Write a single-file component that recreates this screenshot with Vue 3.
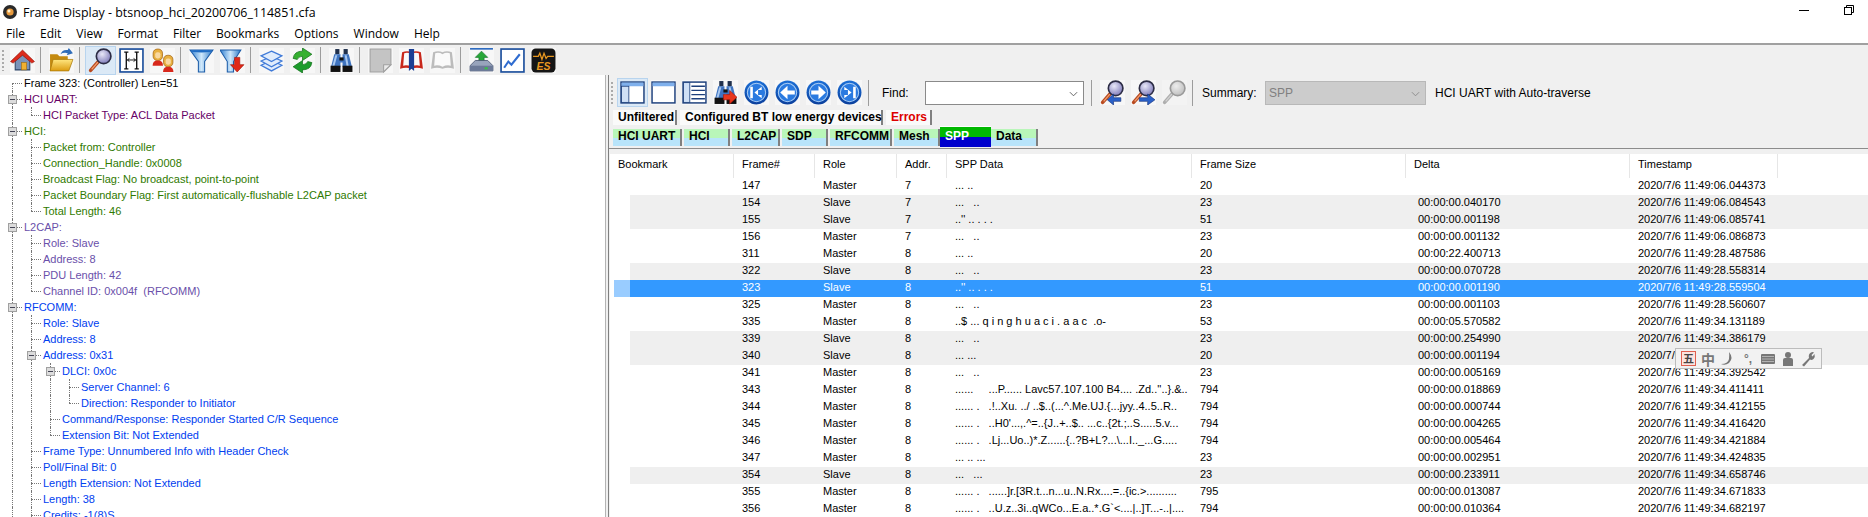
<script setup>
const menus = ['File', 'Edit', 'View', 'Format', 'Filter', 'Bookmarks', 'Options', 'Window', 'Help']

const P = 'purple', G = 'green', V = 'violet', B = 'blue'
const tree = [
  { t: 'Frame 323: (Controller) Len=51', d: 0, c: 'black', k: 'first' },
  { t: 'HCI UART:', d: 0, c: P, k: 'tee', box: true },
  { t: 'HCI Packet Type: ACL Data Packet', d: 1, c: P, k: 'ell' },
  { t: 'HCI:', d: 0, c: G, k: 'tee', box: true },
  { t: 'Packet from: Controller', d: 1, c: G, k: 'tee' },
  { t: 'Connection_Handle: 0x0008', d: 1, c: G, k: 'tee' },
  { t: 'Broadcast Flag: No broadcast, point-to-point', d: 1, c: G, k: 'tee' },
  { t: 'Packet Boundary Flag: First automatically-flushable L2CAP packet', d: 1, c: G, k: 'tee' },
  { t: 'Total Length: 46', d: 1, c: G, k: 'ell' },
  { t: 'L2CAP:', d: 0, c: V, k: 'tee', box: true },
  { t: 'Role: Slave', d: 1, c: V, k: 'tee' },
  { t: 'Address: 8', d: 1, c: V, k: 'tee' },
  { t: 'PDU Length: 42', d: 1, c: V, k: 'tee' },
  { t: 'Channel ID: 0x004f  (RFCOMM)', d: 1, c: V, k: 'ell' },
  { t: 'RFCOMM:', d: 0, c: B, k: 'tee', box: true },
  { t: 'Role: Slave', d: 1, c: B, k: 'tee' },
  { t: 'Address: 8', d: 1, c: B, k: 'tee' },
  { t: 'Address: 0x31', d: 1, c: B, k: 'tee', box: true },
  { t: 'DLCI: 0x0c', d: 2, c: B, k: 'tee', box: true },
  { t: 'Server Channel: 6', d: 3, c: B, k: 'tee' },
  { t: 'Direction: Responder to Initiator', d: 3, c: B, k: 'ell' },
  { t: 'Command/Response: Responder Started C/R Sequence', d: 2, c: B, k: 'tee' },
  { t: 'Extension Bit: Not Extended', d: 2, c: B, k: 'ell' },
  { t: 'Frame Type: Unnumbered Info with Header Check', d: 1, c: B, k: 'tee' },
  { t: 'Poll/Final Bit: 0', d: 1, c: B, k: 'tee' },
  { t: 'Length Extension: Not Extended', d: 1, c: B, k: 'tee' },
  { t: 'Length: 38', d: 1, c: B, k: 'tee' },
  { t: 'Credits: -1(8)S', d: 1, c: B, k: 'tee' },
]

const filterTabs = [
  { t: 'Unfiltered', w: 64 },
  { t: 'Configured BT low energy devices', w: 203 },
  { t: 'Errors', w: 46, red: true },
]
const layerTabs = [
  { t: 'HCI UART', w: 69 },
  { t: 'HCI', w: 46 },
  { t: 'L2CAP', w: 48 },
  { t: 'SDP', w: 46 },
  { t: 'RFCOMM', w: 62 },
  { t: 'Mesh', w: 46 },
  { t: 'SPP', w: 51, active: true },
  { t: 'Data', w: 47 },
]

const columns = ['Bookmark', 'Frame#', 'Role', 'Addr.', 'SPP Data', 'Frame Size', 'Delta', 'Timestamp']
const rows = [
  [147, 'Master', 7, '... ..', 20, '', '2020/7/6 11:49:06.044373', 0],
  [154, 'Slave', 7, '...   ..', 23, '00:00:00.040170', '2020/7/6 11:49:06.084543', 1],
  [155, 'Slave', 7, "..'' .. . . .", 51, '00:00:00.001198', '2020/7/6 11:49:06.085741', 1],
  [156, 'Master', 7, '...   ..', 23, '00:00:00.001132', '2020/7/6 11:49:06.086873', 0],
  [311, 'Master', 8, '... ..', 20, '00:00:22.400713', '2020/7/6 11:49:28.487586', 0],
  [322, 'Slave', 8, '...   ..', 23, '00:00:00.070728', '2020/7/6 11:49:28.558314', 1],
  [323, 'Slave', 8, "..'' .. . . .", 51, '00:00:00.001190', '2020/7/6 11:49:28.559504', 2],
  [325, 'Master', 8, '...   ..', 23, '00:00:00.001103', '2020/7/6 11:49:28.560607', 0],
  [335, 'Master', 8, '..$ ... q i n g h u a c i . a a c  .o-', 53, '00:00:05.570582', '2020/7/6 11:49:34.131189', 0],
  [339, 'Slave', 8, '...   ..', 23, '00:00:00.254990', '2020/7/6 11:49:34.386179', 1],
  [340, 'Slave', 8, '... ...', 20, '00:00:00.001194', '2020/7/6 11:49:34.387373', 1],
  [341, 'Master', 8, '...   ..', 23, '00:00:00.005169', '2020/7/6 11:49:34.392542', 0],
  [343, 'Master', 8, '......     ...P...... Lavc57.107.100 B4.... .Zd..\'\'..}.&..', 794, '00:00:00.018869', '2020/7/6 11:49:34.411411', 0],
  [344, 'Master', 8, '...... .   .!..Xu. ../ ..$..(...^.Me.UJ.{...jyy..4..5..R..', 794, '00:00:00.000744', '2020/7/6 11:49:34.412155', 0],
  [345, 'Master', 8, "...... .   ..H0'...,.^=..{J..+..$.. ...c..{2t.;..S.....5.v...", 794, '00:00:00.004265', '2020/7/6 11:49:34.416420', 0],
  [346, 'Master', 8, '...... .   .Lj...Uo..)*.Z......{..?B+L?...\\...I.._...G.....', 794, '00:00:00.005464', '2020/7/6 11:49:34.421884', 0],
  [347, 'Master', 8, '... .. ...', 23, '00:00:00.002951', '2020/7/6 11:49:34.424835', 0],
  [354, 'Slave', 8, '...   ...', 23, '00:00:00.233911', '2020/7/6 11:49:34.658746', 1],
  [355, 'Master', 8, '...... .   ......]r.[3R.t...n...u..N.Rx....=..{ic.>..........', 795, '00:00:00.013087', '2020/7/6 11:49:34.671833', 0],
  [356, 'Master', 8, '...... .   ..U.z..3i..qWCo...E.a..*.G`<....|..]T...-..|....', 794, '00:00:00.010364', '2020/7/6 11:49:34.682197', 0],
]
</script>

<template>
  <div class="window">
    <svg class="defs" width="0" height="0">
      <defs>
        <linearGradient id="funnelG" x1="0" x2="1" y1="0" y2="0">
          <stop offset="0" stop-color="#2f7fd0" /><stop offset="0.5" stop-color="#cfe8fb" /><stop offset="1" stop-color="#2a78c8" />
        </linearGradient>
        <linearGradient id="navG" x1="0" x2="0" y1="0" y2="1">
          <stop offset="0" stop-color="#1c6fd6" /><stop offset="1" stop-color="#0a3f9c" />
        </linearGradient>
        <linearGradient id="folderG" x1="0" x2="0" y1="0" y2="1">
          <stop offset="0" stop-color="#ffe680" /><stop offset="1" stop-color="#dc9c10" />
        </linearGradient>
        <radialGradient id="lensG" cx="0.4" cy="0.35" r="0.7">
          <stop offset="0" stop-color="#e8e8f8" /><stop offset="1" stop-color="#7c78b8" />
        </radialGradient>
        <symbol id="binoc" viewBox="0 0 24 24">
          <rect x="6" y="1" width="4" height="5" fill="#20304c" /><rect x="14" y="1" width="4" height="5" fill="#20304c" />
          <path d="M5 6h6v5h2V6h6l3 12H13v-4h-2v4H2z" fill="#3f74c0" />
          <path d="M6 7h2L5 18H3zM15 7h2l2 11h-2z" fill="#a8c8f0" />
          <rect x="1.5" y="17" width="9.5" height="6" fill="#111" /><rect x="13" y="17" width="9.5" height="6" fill="#111" />
          <rect x="10" y="9" width="4" height="3" fill="#111" />
        </symbol>
        <symbol id="lens" viewBox="0 0 24 24">
          <path d="M10 13L2.5 21.5" stroke="#b84a20" stroke-width="3.4" stroke-linecap="round" />
          <path d="M9.5 13.5L3.5 20.5" stroke="#f4a070" stroke-width="1.2" />
          <circle cx="15" cy="8" r="7" fill="url(#lensG)" stroke="#2c2c44" stroke-width="1.6" />
        </symbol>
        <symbol id="book" viewBox="0 0 24 24">
          <path d="M1 20L3 4q5-2 9 0q4-2 9 0l2 16q-6-2-11 0q-5-2-11 0z" fill="currentColor" />
          <path d="M4 17L5 5q4-1 7 1q3-2 7-1l1 12q-4-1-8 1q-4-2-8-1z" fill="#fafafa" />
        </symbol>
      </defs>
    </svg>

    <div class="title-bar">
      <svg class="app-icon" viewBox="0 0 14 14">
        <circle cx="7" cy="7" r="7" fill="#2a2a2a" />
        <circle cx="7" cy="7" r="3.6" fill="#e89a3c" />
        <circle cx="6" cy="6" r="1.5" fill="#fff2d0" />
      </svg>
      <span class="title-text">Frame Display - btsnoop_hci_20200706_114851.cfa</span>
      <svg class="win-btn min" viewBox="0 0 10 10"><path d="M0 5.5h10" stroke="#000" stroke-width="1" /></svg>
      <svg class="win-btn restore" viewBox="0 0 10 10" fill="none" stroke="#000">
        <path d="M2.5 2.5V.5h7v7h-2" /><rect x=".5" y="2.5" width="7" height="7" />
      </svg>
    </div>

    <div class="menu-bar">
      <span v-for="m in menus" :key="m">{{ m }}</span>
    </div>

    <div class="toolbar main-tools">
      <i class="grip"></i>
      <button class="tb">
        <svg viewBox="0 0 24 24">
          <path d="M5 12v9h14v-9l-7-6z" fill="#7b93b8" stroke="#2f4668" stroke-width="1" />
          <rect x="11" y="14" width="5" height="7" fill="#f0b030" stroke="#a06c10" stroke-width=".6" />
          <path d="M0.5 13L12 2l11.5 11-2.5 1.5L12 7l-9 7.5z" fill="#dc2a1c" stroke="#901408" stroke-width=".6" />
        </svg>
      </button>
      <i class="sep"></i>
      <button class="tb">
        <svg viewBox="0 0 24 24">
          <path d="M1 6h7l2 2h8v14H1z" fill="#c48a10" />
          <path d="M4 11h19l-4 11H1z" fill="url(#folderG)" stroke="#a87808" stroke-width=".7" />
          <path d="M11 6q2-5 7-4l1-2 4 5-6 2 1-2q-4-1-7 1z" fill="#2f6cb8" />
        </svg>
      </button>
      <i class="sep"></i>
      <button class="tb on"><svg viewBox="0 0 24 24"><use href="#lens" /></svg></button>
      <button class="tb">
        <svg viewBox="0 0 24 24">
          <rect x="1" y="1" width="22" height="22" fill="#fff" stroke="#1c4f9c" stroke-width="1.6" />
          <path d="M5 4h4M5 20h4M15 4h4M15 20h4M7 4v16M17 4v16" stroke="#111" stroke-width="1.3" fill="none" />
          <path d="M8 11.5h8M8 11.5l2-1.5M8 11.5l2 1.5M16 11.5l-2-1.5M16 11.5l-2 1.5" stroke="#111" stroke-width=".9" fill="none" />
        </svg>
      </button>
      <button class="tb">
        <svg viewBox="0 0 24 24">
          <rect x="3" y="1" width="9" height="11" rx="4" fill="#e8b040" stroke="#a06010" stroke-width=".7" />
          <rect x="5" y="4" width="5" height="6" rx="2" fill="#f8d8a0" />
          <path d="M2.500 17q0-5 5-5t5 5z" fill="#d8281c" />
          <rect x="13" y="7" width="9" height="11" rx="4" fill="#e8b040" stroke="#a06010" stroke-width=".7" />
          <rect x="15" y="10" width="5" height="6" rx="2" fill="#f8d8a0" />
          <path d="M12.500 23q0-5 5-5t5 5z" fill="#d8281c" />
        </svg>
      </button>
      <i class="sep"></i>
      <button class="tb">
        <svg viewBox="0 0 24 24">
          <path d="M1 2h22l-8 11v10H9V13z" fill="url(#funnelG)" stroke="#1c5ca8" stroke-width="1" />
          <ellipse cx="12" cy="3" rx="10.5" ry="1.2" fill="#1f6cc4" />
        </svg>
      </button>
      <button class="tb">
        <svg viewBox="0 0 24 24">
          <path d="M0 2h20l-7 11v10H7V13z" fill="url(#funnelG)" stroke="#1c5ca8" stroke-width="1" />
          <path d="M14 9h5v7h4l-6.500 7L10 16h4z" fill="#e02818" stroke="#a01408" stroke-width=".6" />
        </svg>
      </button>
      <i class="sep"></i>
      <button class="tb">
        <svg viewBox="0 0 24 24" fill="#e0ecfc" stroke="#3f7ad8" stroke-width="1.2">
          <path d="M12 12l10 4.500L12 22 2 16.500z" />
          <path d="M12 8l10 4.500L12 18 2 12.500z" />
          <path d="M12 3l10 4.500L12 13 2 7.500z" />
        </svg>
      </button>
      <button class="tb">
        <svg viewBox="0 0 24 24">
          <path d="M3 10q1-7 9-7V0l9 6-9 6V8q-4 0-5 3z" fill="#36b030" stroke="#12701a" stroke-width=".7" />
          <path d="M21 14q-1 7-9 7v3l-9-6 9-6v4q4 0 5-3z" fill="#1c9c2c" stroke="#12701a" stroke-width=".7" />
        </svg>
      </button>
      <i class="sep"></i>
      <button class="tb"><svg viewBox="0 0 24 24"><use href="#binoc" /></svg></button>
      <i class="sep"></i>
      <button class="tb">
        <svg viewBox="0 0 24 24">
          <path d="M2 1h20v15l-7 7H2z" fill="#c4c4c4" stroke="#a0a0a0" />
          <path d="M22 16h-7v7z" fill="#eaeaea" stroke="#a0a0a0" />
        </svg>
      </button>
      <button class="tb">
        <svg viewBox="0 0 24 24">
          <use href="#book" class="red-book" />
          <path d="M9.5 1h5v21l-2.500-2-2.500 2z" fill="#1c3f94" />
        </svg>
      </button>
      <button class="tb"><svg viewBox="0 0 24 24"><use href="#book" class="grey-book" /></svg></button>
      <i class="sep"></i>
      <button class="tb">
        <svg viewBox="0 0 24 24">
          <rect x="1" y="0" width="22" height="1.6" fill="#2f6cc0" />
          <path d="M12 3l6 6h-3.500v5h-5V9H6z" fill="#28a838" stroke="#10702a" stroke-width=".6" />
          <path d="M1 17l5-5h12l5 5v5H1z" fill="#98a4bc" stroke="#4c5874" stroke-width=".8" />
          <path d="M1 17h22v5H1z" fill="#6c7a98" />
          <rect x="15" y="18.500" width="3" height="2" fill="#38c048" />
        </svg>
      </button>
      <button class="tb">
        <svg viewBox="0 0 24 24">
          <rect x="1" y="1" width="22" height="22" fill="#fff" stroke="#1c4f9c" stroke-width="1.6" />
          <path d="M4 19l4-6 3 3 8-10" fill="none" stroke="#2f6cd0" stroke-width="2" />
        </svg>
      </button>
      <button class="tb">
        <svg viewBox="0 0 24 24">
          <rect x="0.5" y="0.5" width="23" height="23" rx="4" fill="#151515" />
          <path d="M2 8h5l1.500-3 2 6 2-6 2 5 1.500-2H22" fill="none" stroke="#e89820" stroke-width="1.200" />
          <text x="12" y="21" text-anchor="middle" class="es">ES</text>
        </svg>
      </button>
    </div>

    <div class="panes">
      <div class="tree-pane">
        <div v-for="(n, i) in tree" :key="i" class="node" :class="n.c">
          <i v-for="g in n.d" :key="g" class="guide"></i>
          <i class="link" :class="n.k">
            <b v-if="n.box" class="box"></b>
          </i>
          <span class="node-text">{{ n.t }}</span>
        </div>
      </div>

      <div class="detail-pane">
        <div class="toolbar detail-tools">
          <i class="grip"></i>
          <button class="tb on">
            <svg viewBox="0 0 24 24">
              <rect x="1" y="2" width="22" height="20" fill="#fff" stroke="#1c3f7c" stroke-width="1.400" />
              <rect x="1.500" y="2.500" width="21" height="3.500" fill="#7fb0ec" />
              <rect x="1.500" y="6" width="7" height="15.500" fill="#cfe0f6" stroke="#1c3f7c" stroke-width=".8" />
            </svg>
          </button>
          <button class="tb">
            <svg viewBox="0 0 24 24">
              <rect x="1" y="2" width="22" height="20" fill="#fff" stroke="#1c3f7c" stroke-width="1.400" />
              <rect x="1.500" y="2.500" width="21" height="3.500" fill="#7fb0ec" />
            </svg>
          </button>
          <button class="tb">
            <svg viewBox="0 0 24 24">
              <rect x="1" y="2" width="22" height="20" fill="#fff" stroke="#1c3f7c" stroke-width="1.400" />
              <rect x="1.500" y="2.500" width="6" height="19" fill="#cfe0f6" stroke="#1c3f7c" stroke-width=".8" />
              <path d="M9 6h13M9 10h13M9 14h13M9 18h13" stroke="#1c3f7c" stroke-width="1.300" />
            </svg>
          </button>
          <button class="tb">
            <svg viewBox="0 0 24 24">
              <use href="#binoc" />
              <path d="M10 14h6v-4l7 6.500-7 6.500v-4h-6z" fill="#e8361c" stroke="#a01408" stroke-width=".6" />
            </svg>
          </button>
          <button class="tb">
            <svg viewBox="0 0 24 24">
              <circle cx="12" cy="12" r="11.500" fill="url(#navG)" />
              <circle cx="12" cy="12" r="8.800" fill="#2a7ae0" stroke="#a8ccf4" stroke-width="1" />
              <path d="M6 6.500h2.500v11H6zM17 6.500v3h-3.500v5H17v3l-7-5.500z" fill="#fff" />
            </svg>
          </button>
          <button class="tb">
            <svg viewBox="0 0 24 24">
              <circle cx="12" cy="12" r="11.500" fill="url(#navG)" />
              <circle cx="12" cy="12" r="8.800" fill="#2a7ae0" stroke="#a8ccf4" stroke-width="1" />
              <path d="M5 12l7-6.500V10h7v4h-7v4.500z" fill="#fff" />
            </svg>
          </button>
          <button class="tb">
            <svg viewBox="0 0 24 24">
              <circle cx="12" cy="12" r="11.500" fill="url(#navG)" />
              <circle cx="12" cy="12" r="8.800" fill="#2a7ae0" stroke="#a8ccf4" stroke-width="1" />
              <path d="M19 12l-7-6.500V10H5v4h7v4.500z" fill="#fff" />
            </svg>
          </button>
          <button class="tb">
            <svg viewBox="0 0 24 24">
              <circle cx="12" cy="12" r="11.500" fill="url(#navG)" />
              <circle cx="12" cy="12" r="8.800" fill="#2a7ae0" stroke="#a8ccf4" stroke-width="1" />
              <path d="M18 6.500h-2.500v11H18zM7 6.500v3h3.500v5H7v3l7-5.500z" fill="#fff" />
            </svg>
          </button>
          <i class="sep find-sep"></i>
          <label class="find-label">Find:</label>
          <div class="combo">
            <svg viewBox="0 0 10 6" class="chev"><path d="M1 1l4 4 4-4" fill="none" stroke="#555" /></svg>
          </div>
          <i class="sep combo-sep"></i>
          <button class="tb">
            <svg viewBox="0 0 24 24">
              <use href="#lens" />
              <path d="M20 17h-7v-3.500l-6 5.500 6 5v-3.500h7z" fill="#2a60c8" stroke="#12307c" stroke-width=".6" />
            </svg>
          </button>
          <button class="tb">
            <svg viewBox="0 0 24 24">
              <use href="#lens" />
              <path d="M8 17h8v-3.500l7 5.500-7 5v-3.500H8z" fill="#2a60c8" stroke="#12307c" stroke-width=".6" />
            </svg>
          </button>
          <button class="tb faded"><svg viewBox="0 0 24 24"><use href="#lens" /></svg></button>
          <i class="sep summary-sep"></i>
          <label class="summary-label">Summary:</label>
          <div class="combo summary">
            <span>SPP</span>
            <svg viewBox="0 0 10 6" class="chev"><path d="M1 1l4 4 4-4" fill="none" stroke="#888" /></svg>
          </div>
          <span class="traverse">HCI UART with Auto-traverse</span>
        </div>

        <div class="tabs filter-tabs">
          <span v-for="t in filterTabs" :key="t.t" class="tab" :class="{ red: t.red }" :style="{ width: t.w + 'px' }">{{ t.t }}</span>
        </div>
        <div class="tabs layer-tabs">
          <span v-for="t in layerTabs" :key="t.t" class="tab" :class="{ active: t.active }" :style="{ width: t.w + 'px' }">{{ t.t }}</span>
        </div>

        <div class="table">
          <div class="thead">
            <span v-for="c in columns" :key="c" class="th">{{ c }}</span>
            <span class="th tail"></span>
          </div>
          <div v-for="r in rows" :key="r[0]" class="row" :class="{ selected: r[7] === 2 }">
            <i class="gutter"></i>
            <div class="cells" :class="{ striped: r[7] === 1 }">
              <span></span>
              <span>{{ r[0] }}</span>
              <span>{{ r[1] }}</span>
              <span>{{ r[2] }}</span>
              <span class="data">{{ r[3] }}</span>
              <span>{{ r[4] }}</span>
              <span class="delta">{{ r[5] }}</span>
              <span>{{ r[6] }}</span>
            </div>
          </div>
        </div>
      </div>
    </div>

    <div class="ime-bar">
      <span class="ime-wu">五</span>
      <span class="ime-zh">中</span>
      <svg viewBox="0 0 16 16"><path d="M9 1q5 6 0 11-4 3-8 1 7 0 8-5 .5-4 0-7z" fill="#777" /></svg>
      <span class="ime-punc">°,</span>
      <svg viewBox="0 0 16 16"><rect x="1" y="3" width="14" height="10" rx="1" fill="#777" /><path d="M2.500 5.500h11M2.500 8h11M2.500 10.500h11" stroke="#eee" stroke-dasharray="1 1" /></svg>
      <svg viewBox="0 0 16 16"><circle cx="8" cy="4" r="3" fill="#777" /><path d="M3 15V9q0-2 2-2h6q2 0 2 2v6z" fill="#777" /></svg>
      <svg viewBox="0 0 16 16"><path d="M2 14l7-7q-1-4 2-5.500 2-.8 3 0l-2.500 2.500 1 1.500 2-2.500q1 3-1 5-2 1.500-3.500.5l-6 7z" fill="#777" /></svg>
    </div>
  </div>
</template>

<style>
html, body {
  margin: 0;
  overflow: hidden;
  background: #fff;
}
</style>

<style scoped>
.window {
  position: relative;
  display: flex;
  flex-direction: column;
  width: 1868px;
  height: 517px;
  overflow: hidden;
  background: #fff;
  font-family: "Liberation Sans", Arial, sans-serif;
  font-size: 12px;
  color: #000;
}

.defs {
  position: absolute;
}

.title-bar {
  display: flex;
  align-items: center;
  height: 24px;
  padding-left: 3px;
  flex: none;
}

.app-icon {
  width: 14px;
  height: 14px;
  margin-right: 6px;
}

.title-text {
  font-family: "Open Sans", sans-serif;
  font-size: 12.4px;
}

.win-btn {
  width: 10px;
  height: 10px;
  margin-top: -4px;
}

.win-btn.min {
  margin-left: auto;
}

.win-btn.restore {
  margin-left: 35px;
  margin-right: 14px;
}

.menu-bar {
  display: flex;
  gap: 15px;
  height: 19px;
  padding-left: 6px;
  flex: none;
  align-items: center;
  font-family: "Open Sans", sans-serif;
  font-size: 12px;
  border-bottom: 2px solid #a0a0a0;
  box-sizing: content-box;
}

.toolbar {
  display: flex;
  align-items: center;
  background: #f0f0f0;
  flex: none;
}

.main-tools {
  position: relative;
  height: 30px;
  padding-left: 7px;
}

.grip {
  position: absolute;
  left: 2px;
  top: 4px;
  bottom: 4px;
  width: 2px;
  background: radial-gradient(circle, #aaa 1px, transparent 1px) 0 0 / 2px 4px;
}

.tb {
  display: flex;
  align-items: center;
  justify-content: center;
  width: 31px;
  height: 29px;
  padding: 0;
  border: 1px solid transparent;
  background: none;
  box-sizing: border-box;
}

.tb svg {
  width: 25px;
  height: 25px;
  background: #f7f7f7;
}

.tb.on {
  background: #dbe9f6;
  border-color: #b8d4ee;
}

.tb.on svg {
  background: none;
}

.tb.faded svg {
  filter: grayscale(1) opacity(0.45);
}

.sep {
  width: 1px;
  height: 26px;
  margin: 0 5px 0 2px;
  background: #9c9c9c;
  flex: none;
}

.es {
  font-family: "Liberation Sans", sans-serif;
  font-size: 10px;
  font-weight: 700;
  font-style: italic;
  fill: #e89820;
}

.red-book {
  color: #c8281c;
}

.grey-book {
  color: #bcbcbc;
}

.panes {
  display: flex;
  flex: 1;
  min-height: 0;
  background: #f0f0f0;
}

.tree-pane {
  width: 605px;
  flex: none;
  background: #fff;
  border-right: 1px solid #b4b4b4;
  overflow: hidden;
  font-size: 11px;
}

.node {
  display: flex;
  height: 16px;
  padding-left: 12px;
  line-height: 16px;
  white-space: pre;
}

.node.black { color: #000; }
.node.purple { color: #660066; }
.node.green { color: #2f7a00; }
.node.violet { color: #6a50aa; }
.node.blue { color: #0040f0; }

.guide {
  width: 19px;
  flex: none;
  box-sizing: border-box;
  border-left: 1px dotted #777;
}

.link {
  position: relative;
  width: 12px;
  flex: none;
}

.link::before {
  content: "";
  position: absolute;
  left: 0;
  top: 0;
  height: 100%;
  border-left: 1px dotted #777;
}

.link.first::before {
  top: 50%;
  height: 50%;
}

.link.ell::before {
  height: 50%;
}

.link::after {
  content: "";
  position: absolute;
  left: 0;
  top: 8px;
  width: 10px;
  border-top: 1px dotted #777;
}

.box {
  position: absolute;
  z-index: 1;
  left: -4px;
  top: 4px;
  width: 9px;
  height: 9px;
  box-sizing: border-box;
  border: 1px solid #a0a0a0;
  background: linear-gradient(#445 0 0) center / 5px 1px no-repeat, #dcdcdc;
}

.detail-pane {
  position: relative;
  flex: 1;
  min-width: 0;
  margin-left: 2px;
  border-left: 1px solid #808080;
  display: flex;
  flex-direction: column;
}

.detail-tools {
  position: relative;
  height: 31px;
  padding-left: 8px;
  margin-top: 2px;
}

.find-sep {
  margin: 0 13px 0 3px;
}

.find-label {
  width: 43px;
  flex: none;
}

.combo {
  position: relative;
  display: flex;
  align-items: center;
  width: 159px;
  height: 24px;
  box-sizing: border-box;
  border: 1px solid #8a8a8a;
  background: #fff;
  flex: none;
}

.chev {
  position: absolute;
  right: 5px;
  top: 9px;
  width: 9px;
  height: 6px;
}

.combo-sep {
  margin: 0 5px 0 7px;
}

.summary-sep {
  margin: 0 9px 0 2px;
}

.summary-label {
  width: 63px;
  flex: none;
}

.combo.summary {
  width: 161px;
  background: #cccccc;
  border-color: #b8b8b8;
  color: #808080;
  padding-left: 3px;
}

.traverse {
  margin-left: 9px;
}

.tabs {
  display: flex;
  flex: none;
  padding-left: 4px;
  font-weight: 700;
}

.filter-tabs {
  height: 15px;
  margin-top: 2px;
  gap: 3px;
}

.filter-tabs .tab {
  background: #fafafa;
  border-right: 2px solid #808080;
  line-height: 15px;
}

.tab {
  box-sizing: border-box;
  padding-left: 5px;
  white-space: pre;
  flex: none;
}

.tab.red {
  color: #dd0000;
}

.layer-tabs {
  align-items: center;
  height: 22px;
  margin-top: 1px;
  border-bottom: 1px solid #8c8c8c;
  gap: 2px;
}

.layer-tabs .tab {
  height: 17px;
  line-height: 15px;
  background: linear-gradient(#b9f6b9 50%, #b8e4fa 50%);
  border-right: 2px solid #808080;
}

.layer-tabs .tab.active {
  align-self: flex-start;
  height: 21px;
  margin: 0 -2px;
  line-height: 18px;
  color: #fff;
  background: linear-gradient(#00b800 50%, #0000cc 50%);
  border-top: 1px solid #fff;
  border-right: none;
}

.table {
  margin-top: 5px;
  margin-left: 1px;
  font-size: 11px;
  background: #fff;
  flex: 1;
  overflow: hidden;
}

.thead,
.cells {
  display: grid;
}

.thead {
  height: 24px;
  grid-template-columns: 124px 81px 82px 50px 245px 214px 224px 148px 1fr;
}

.th {
  line-height: 21px;
  padding-left: 8px;
  border-right: 1px solid #e6e6e6;
  white-space: nowrap;
}

.th.tail {
  border: none;
}

.row {
  display: flex;
  height: 17px;
  line-height: 15px;
}

.gutter {
  width: 20px;
  flex: none;
}

.cells {
  flex: 1;
  grid-template-columns: 104px 81px 82px 50px 245px 214px 224px 148px;
}

.cells.striped {
  background: #efefef;
}

.cells span {
  padding-left: 8px;
  overflow: hidden;
  white-space: pre;
}

.cells .delta {
  padding-left: 12px;
}

.row.selected .gutter {
  margin-left: 4px;
  width: 16px;
  background: #99ccff;
}

.row.selected .cells {
  background: #3399ff;
  color: #fff;
}

.ime-bar {
  position: absolute;
  left: 1675px;
  top: 348px;
  display: flex;
  align-items: center;
  gap: 4px;
  height: 21px;
  width: 147px;
  padding-left: 5px;
  box-sizing: border-box;
  background: #f2f2f2;
  border: 1px solid #bcbcbc;
}

.ime-bar svg {
  width: 16px;
  height: 16px;
  flex: none;
}

.ime-wu {
  width: 15px;
  height: 15px;
  box-sizing: border-box;
  border: 1px solid #e06050;
  background: #fbe4e0;
  font: 700 11px/13px "Noto Sans CJK SC", sans-serif;
  text-align: center;
  color: #444;
}

.ime-zh {
  width: 16px;
  font: 700 14px/16px "Noto Sans CJK SC", sans-serif;
  color: #777;
  text-align: center;
}

.ime-punc {
  width: 16px;
  font: 700 12px/16px "Liberation Sans", sans-serif;
  color: #777;
  text-align: center;
}
</style>
